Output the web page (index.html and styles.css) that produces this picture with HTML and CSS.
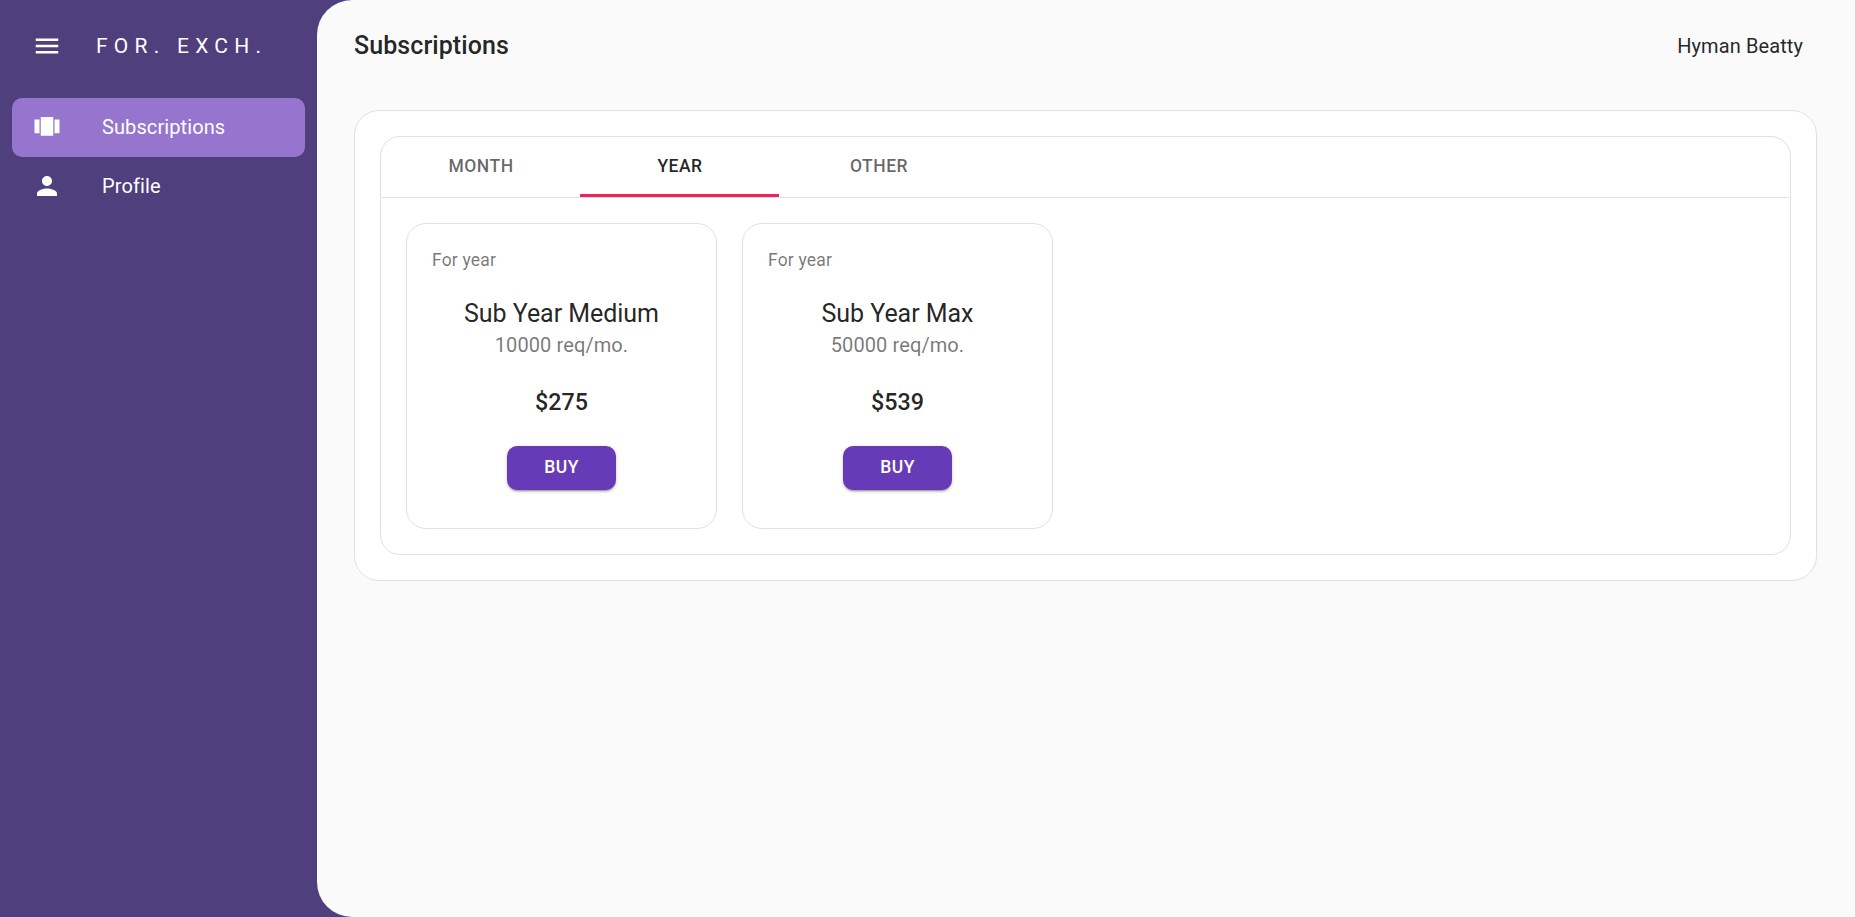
FILE: index.html
```html
<!DOCTYPE html>
<html lang="en">
<head>
<meta charset="utf-8">
<title>Subscriptions</title>
<link rel="stylesheet" href="styles.css">
</head>
<body>
<div class="app">
  <aside class="sidebar">
    <div class="brand">
      <svg class="icon" viewBox="0 0 24 24"><path d="M3 18h18v-2H3v2zm0-5h18v-2H3v2zm0-7v2h18V6H3z"/></svg>
      <span class="brand-name">FOR. EXCH.</span>
    </div>
    <nav class="nav">
      <a class="nav-item active">
        <svg class="icon" viewBox="0 0 24 24"><path d="M7 19h10V4H7v15zm-5-2h4V6H2v11zM18 6v11h4V6h-4z"/></svg>
        <span>Subscriptions</span>
      </a>
      <a class="nav-item">
        <svg class="icon" viewBox="0 0 24 24"><path d="M12 12c2.21 0 4-1.79 4-4s-1.79-4-4-4-4 1.79-4 4 1.79 4 4 4zm0 2c-2.67 0-8 1.34-8 4v2h16v-2c0-2.66-5.33-4-8-4z"/></svg>
        <span>Profile</span>
      </a>
    </nav>
  </aside>
  <main class="main">
    <header class="header">
      <h1 class="title">Subscriptions</h1>
      <span class="user">Hyman Beatty</span>
    </header>
    <section class="panel">
      <div class="plans">
        <div class="tabs">
          <button class="tab">MONTH</button>
          <button class="tab selected">YEAR</button>
          <button class="tab">OTHER</button>
        </div>
        <div class="cards">
          <article class="card">
            <div class="period">For year</div>
            <h2 class="name">Sub Year Medium</h2>
            <div class="quota">10000 req/mo.</div>
            <div class="price">$275</div>
            <button class="buy">BUY</button>
          </article>
          <article class="card">
            <div class="period">For year</div>
            <h2 class="name">Sub Year Max</h2>
            <div class="quota">50000 req/mo.</div>
            <div class="price">$539</div>
            <button class="buy">BUY</button>
          </article>
        </div>
      </div>
    </section>
  </main>
</div>
</body>
</html>
```
FILE: styles.css
```css
* { box-sizing: border-box; }
html { font-size: 20px; }
body {
  margin: 0;
  font-family: Roboto, sans-serif;
  font-size: 1rem;
  line-height: 1.5;
  letter-spacing: 0.005em;
  color: rgba(0, 0, 0, 0.87);
  background: #4f3f7d;
}
button { font: inherit; border: 0; background: none; padding: 0; }
.app { display: flex; height: 100vh; overflow: hidden; }
.icon { width: 30px; height: 30px; fill: currentColor; flex: none; }

.sidebar { width: 317px; flex: none; color: #fff; }
.brand { display: flex; align-items: center; height: 92px; padding-left: 32px; gap: 34px; }
.brand-name { padding-top: 1px; font-size: 21px; letter-spacing: 6.25px; }
.nav { margin: 6px 12px 0; }
.nav-item {
  display: flex;
  align-items: center;
  gap: 40px;
  height: 59px;
  padding: 0 0 1px 20px;
  border-radius: 10px;
}
.nav-item.active { background: #9575cd; }

.main {
  flex: 1;
  padding: 0 38px 0 37px;
  background: #fafafa;
  border-radius: 35px 0 0 35px;
}
.header { display: flex; align-items: center; justify-content: space-between; height: 92px; padding-right: 14px; }
.title { margin: 0; font-size: 25px; font-weight: 500; line-height: 1.6; letter-spacing: 0.003em; }

.panel { margin-top: 18px; padding: 25px; background: #fff; border: 1px solid #e0e0e0; border-radius: 25px; }
.plans { height: 419px; border: 1px solid #e0e0e0; border-radius: 20px; }
.tabs { display: flex; height: 61px; margin: 0 1px; border-bottom: 1px solid #e0e0e0; }
.tab {
  width: 199px;
  height: 60px;
  padding-left: 1px;
  font-size: 17.5px;
  font-weight: 500;
  line-height: 1.25;
  letter-spacing: 0.02857em;
  color: rgba(0, 0, 0, 0.6);
}
.tab:first-child { margin-left: -1px; }
.tab.selected { color: rgba(0, 0, 0, 0.87); box-shadow: inset 0 -3px #f6205b; }

.cards { display: flex; gap: 25px; padding: 25px; }
.card {
  display: flex;
  flex-direction: column;
  align-items: center;
  width: 311px;
  height: 306px;
  padding: 25px;
  border: 1px solid #e0e0e0;
  border-radius: 20px;
}
.period { align-self: flex-start; font-size: 17.5px; line-height: 25px; letter-spacing: 0.01071em; color: rgba(0, 0, 0, 0.54); margin-top: -1px; }
.name { margin: 21px 0 0; font-size: 25px; font-weight: 400; line-height: 1.6; letter-spacing: -0.05px; }
.quota { margin-top: -4px; color: rgba(0, 0, 0, 0.54); }
.price { margin-top: 24px; font-size: 23.3px; font-weight: 500; line-height: 36px; letter-spacing: 0; }
.buy {
  width: 109px;
  height: 44px;
  margin-top: 26px;
  border-radius: 10px;
  background: #673ab7;
  color: #fff;
  font-size: 17.5px;
  font-weight: 500;
  letter-spacing: 0.02857em;
  padding-bottom: 2px;
  box-shadow: 0 3px 1px -2px rgba(0,0,0,.2), 0 2px 2px 0 rgba(0,0,0,.14), 0 1px 5px 0 rgba(0,0,0,.12);
}
```
